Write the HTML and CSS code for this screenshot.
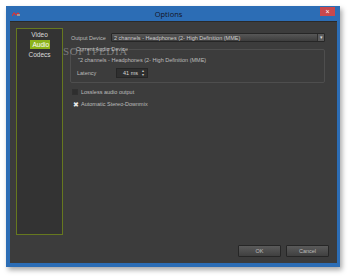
FILE: index.html
```html
<!DOCTYPE html>
<html>
<head>
<meta charset="utf-8">
<link rel="stylesheet" href="styles.css">
</head>
<body>
<div class="window">
  <div class="titlebar">
    <svg class="app-icon" width="8" height="5" viewBox="0 0 8 5"><path d="M0 4 L2 1 L4 3 L6 1 L8 3" fill="none" stroke="#d33" stroke-width="1.2"/><rect x="5" y="2" width="3" height="2" fill="#999"/></svg>
    <div class="title">Options</div>
    <div class="close">×</div>
  </div>
  <div class="content">
    <div class="main">
      <div class="sidebar">
        <div class="nav-item">Video</div>
        <div class="nav-item active">Audio</div>
        <div class="nav-item">Codecs</div>
      </div>
      <div class="form">
        <div class="row-output">
          <span class="label">Output Device</span>
          <div class="select">
            <span class="select-text">2 channels - Headphones (2- High Definition (MME)</span>
            <span class="select-arrow">▾</span>
          </div>
        </div>
        <div class="group">
          <div class="group-title">Current Audio Device</div>
          <div class="device">"2 channels - Headphones (2- High Definition (MME)</div>
          <div class="latency-row">
            <span class="latency-label">Latency</span>
            <div class="spin">
              <span>41 ms</span>
              <span class="spin-arrows"><i>▴</i><i>▾</i></span>
            </div>
          </div>
        </div>
        <div class="check-row">
          <span class="checkbox"></span>
          <span>Lossless audio output</span>
        </div>
        <div class="check-row">
          <span class="checkbox checked">✖</span>
          <span>Automatic Stereo-Downmix</span>
        </div>
        <div class="watermark">SOFTPEDIA</div>
      </div>
    </div>
    <div class="footer">
      <div class="btn">OK</div>
      <div class="btn">Cancel</div>
    </div>
  </div>
</div>
</body>
</html>
```
FILE: styles.css
```css
html, body {
  margin: 0;
  padding: 0;
  background: #ffffff;
  width: 350px;
  height: 278px;
  overflow: hidden;
}
body {
  font-family: "Liberation Sans", Arial, sans-serif;
}
.window {
  margin: 6px 0 0 6px;
  width: 334px;
  height: 261px;
  box-sizing: border-box;
  background: #2c6db5;
  padding: 0 3px 4px 4px;
  box-shadow: 2px 3px 5px rgba(0,0,0,0.35);
  display: flex;
  flex-direction: column;
}
.titlebar {
  height: 16px;
  display: flex;
  align-items: center;
  position: relative;
}
.app-icon {
  margin-left: 2px;
  margin-top: 1px;
}
.title {
  flex: 1;
  text-align: center;
  font-family: "Open Sans", "Liberation Sans", sans-serif;
  font-size: 7.5px;
  color: #14141f;
  margin-right: 20px;
  margin-top: 1px;
}
.close {
  position: absolute;
  right: 2px;
  top: 1px;
  width: 15px;
  height: 9px;
  background: #c8484c;
  color: #fff;
  font-size: 7px;
  line-height: 9px;
  text-align: center;
}
.content {
  flex: 1;
  background: #3c3c3c;
  display: flex;
  flex-direction: column;
  padding: 6px 0 6px 6px;
  border-top: 1px solid #2a2a2a;
  box-sizing: border-box;
}
.main {
  display: flex;
  height: 207px;
}
.sidebar {
  width: 47px;
  box-sizing: border-box;
  border: 1px solid #66781f;
  background: #333333;
  display: flex;
  flex-direction: column;
  align-items: center;
  padding-top: 1px;
}
.nav-item {
  font-size: 6.5px;
  color: #dcdcdc;
  line-height: 9px;
  height: 9px;
  padding: 0 3px;
  margin-bottom: 1px;
}
.nav-item.active {
  background: #8db41a;
  color: #ffffff;
  width: 14px;
  text-align: center;
}
.form {
  flex: 1;
  margin-left: 7px;
  margin-right: 12px;
  padding-top: 5px;
  position: relative;
  font-size: 5.5px;
  color: #bcbcbc;
}
.row-output {
  display: flex;
  align-items: center;
  height: 9px;
}
.label {
  width: 40px;
  padding-left: 1px;
}
.select {
  flex: 1;
  height: 9px;
  box-sizing: border-box;
  border: 1px solid #262626;
  border-radius: 1px;
  background: linear-gradient(#575757, #3d3d3d);
  display: flex;
  align-items: center;
  padding-left: 2px;
  color: #d0d0d0;
}
.select-text {
  flex: 1;
}
.select-arrow {
  width: 6px;
  height: 7px;
  background: #5a5a5a;
  border-left: 1px solid #2e2e2e;
  font-size: 5px;
  line-height: 7px;
  text-align: center;
  color: #ddd;
}
.group {
  margin-top: 7px;
  height: 34px;
  box-sizing: border-box;
  border: 1px solid #4e4e4e;
  border-radius: 2px;
  position: relative;
  padding: 7px 0 0 7px;
}
.group-title {
  position: absolute;
  top: -4px;
  left: 4px;
  background: #3c3c3c;
  padding: 0 1px;
  line-height: 7px;
}
.device {
  line-height: 7px;
}
.latency-row {
  display: flex;
  align-items: center;
  margin-top: 4px;
  margin-left: -1px;
}
.latency-label {
  width: 39px;
}
.spin {
  width: 32px;
  height: 10px;
  box-sizing: border-box;
  border: 1px solid #262626;
  background: #2f2f2f;
  display: flex;
  align-items: center;
  padding-left: 6px;
  color: #d8d8d8;
}
.spin span:first-child {
  flex: 1;
}
.spin-arrows {
  display: flex;
  flex-direction: column;
  width: 5px;
  font-size: 4px;
  line-height: 4px;
  color: #ccc;
}
.spin-arrows i {
  font-style: normal;
}
.check-row {
  display: flex;
  align-items: center;
  height: 7px;
  margin-top: 5px;
  padding-left: 2px;
}
.check-row:first-of-type {
  margin-top: 6px;
}
.checkbox {
  width: 6px;
  height: 6px;
  background: #2e2e2e;
  border: 1px solid #303030;
  box-sizing: border-box;
  margin-right: 3px;
  font-size: 6.5px;
  line-height: 6px;
  text-align: center;
  color: #e8e8e8;
}
.checkbox.checked {
  background: transparent;
  border-color: transparent;
}
.watermark {
  position: absolute;
  left: -7px;
  top: 17px;
  font-family: "Liberation Serif", serif;
  font-size: 11px;
  letter-spacing: 0.6px;
  color: rgba(220,220,220,0.4);
  pointer-events: none;
}
.footer {
  margin-top: 10px;
  display: flex;
  justify-content: flex-end;
  padding-right: 8px;
  gap: 5px;
}
.btn {
  width: 43px;
  height: 12px;
  box-sizing: border-box;
  border: 1px solid #262626;
  border-radius: 1px;
  background: linear-gradient(#5a5a5a, #404040);
  color: #bdbdbd;
  font-size: 5.5px;
  line-height: 10px;
  text-align: center;
}
```
